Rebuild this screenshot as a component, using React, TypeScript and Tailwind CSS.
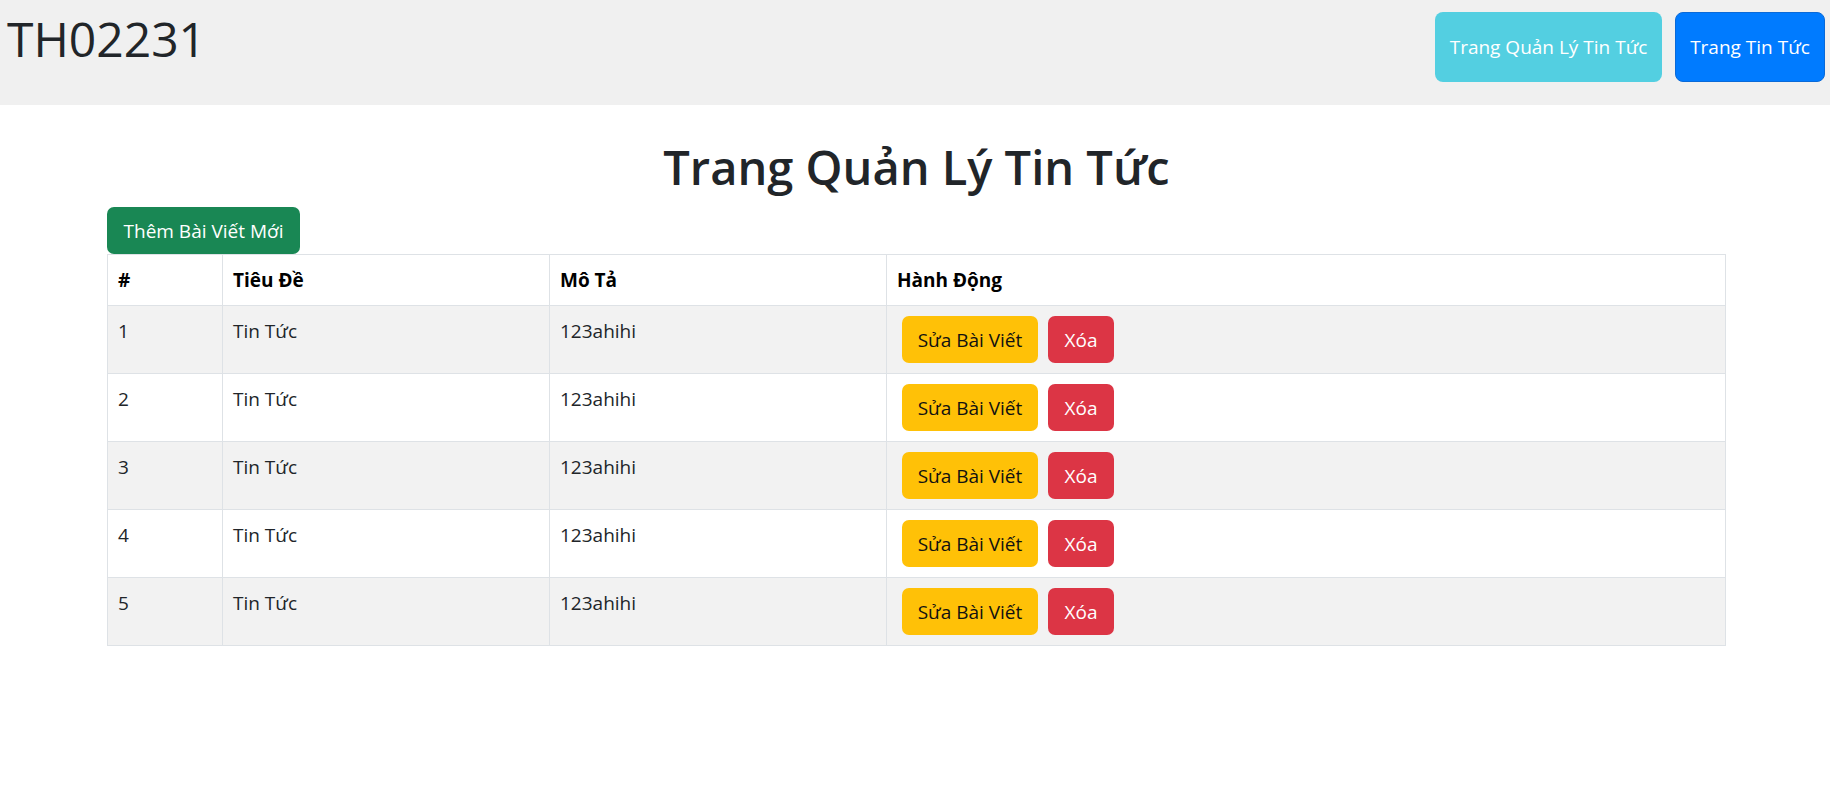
import React from "react";

const rows = [1, 2, 3, 4, 5];

export default function App() {
  return (
    <div className="min-h-[786px] bg-white text-[#212529]" style={{ fontFamily: '"Open Sans", "Noto Sans", sans-serif' }}>
      <header className="flex h-[105px] items-start justify-between bg-[#f0f0f0] pl-[7px] pr-[5px]">
        <h1 className="mt-[9px] text-[48px] font-medium leading-[60px] text-[#212529]">TH02231</h1>
        <div className="mt-[12px] flex gap-[13px]">
          <button className="flex h-[70px] w-[227px] items-center justify-center rounded-[8px] bg-[#53cfe1] text-[19px] text-white">
            Trang Quản Lý Tin Tức
          </button>
          <button className="flex h-[70px] w-[150px] items-center justify-center rounded-[8px] border border-[#0a6ad8] bg-[#007bff] text-[19px] text-white">
            Trang Tin Tức
          </button>
        </div>
      </header>

      <main className="ml-[107px] w-[1619px]">
        <h1 className="mt-[32px] mb-[10px] text-center text-[47px] font-semibold leading-[60px]">Trang Quản Lý Tin Tức</h1>
        <button className="h-[47px] w-[193px] rounded-[7px] bg-[#198754] text-[19px] leading-[30px] text-white">
          Thêm Bài Viết Mới
        </button>
        <table className="w-full border-collapse text-[19px] leading-[30px]">
          <thead>
            <tr>
              <th className="w-[115px] border border-[#dee2e6] px-[10px] py-[10px] text-left font-bold text-black">#</th>
              <th className="w-[327px] border border-[#dee2e6] px-[10px] py-[10px] text-left font-bold text-black">Tiêu Đề</th>
              <th className="w-[337px] border border-[#dee2e6] px-[10px] py-[10px] text-left font-bold text-black">Mô Tả</th>
              <th className="border border-[#dee2e6] px-[10px] py-[10px] text-left font-bold text-black">Hành Động</th>
            </tr>
          </thead>
          <tbody>
            {rows.map((n, i) => (
              <tr key={n} className={i % 2 === 0 ? "bg-[#f2f2f2]" : "bg-white"}>
                <td className="border border-[#dee2e6] px-[10px] py-[10px] align-top">{n}</td>
                <td className="border border-[#dee2e6] px-[10px] py-[10px] align-top">Tin Tức</td>
                <td className="border border-[#dee2e6] px-[10px] py-[10px] align-top">123ahihi</td>
                <td className="border border-[#dee2e6] px-[10px] py-[10px] align-top">
                  <div className="flex">
                    <button className="mx-[5px] h-[47px] w-[136px] rounded-[7px] bg-[#ffc107] text-[19px] text-[#111]">
                      Sửa Bài Viết
                    </button>
                    <button className="mx-[5px] h-[47px] w-[66px] rounded-[7px] bg-[#dc3545] text-[19px] text-white">
                      Xóa
                    </button>
                  </div>
                </td>
              </tr>
            ))}
          </tbody>
        </table>
      </main>
    </div>
  );
}
